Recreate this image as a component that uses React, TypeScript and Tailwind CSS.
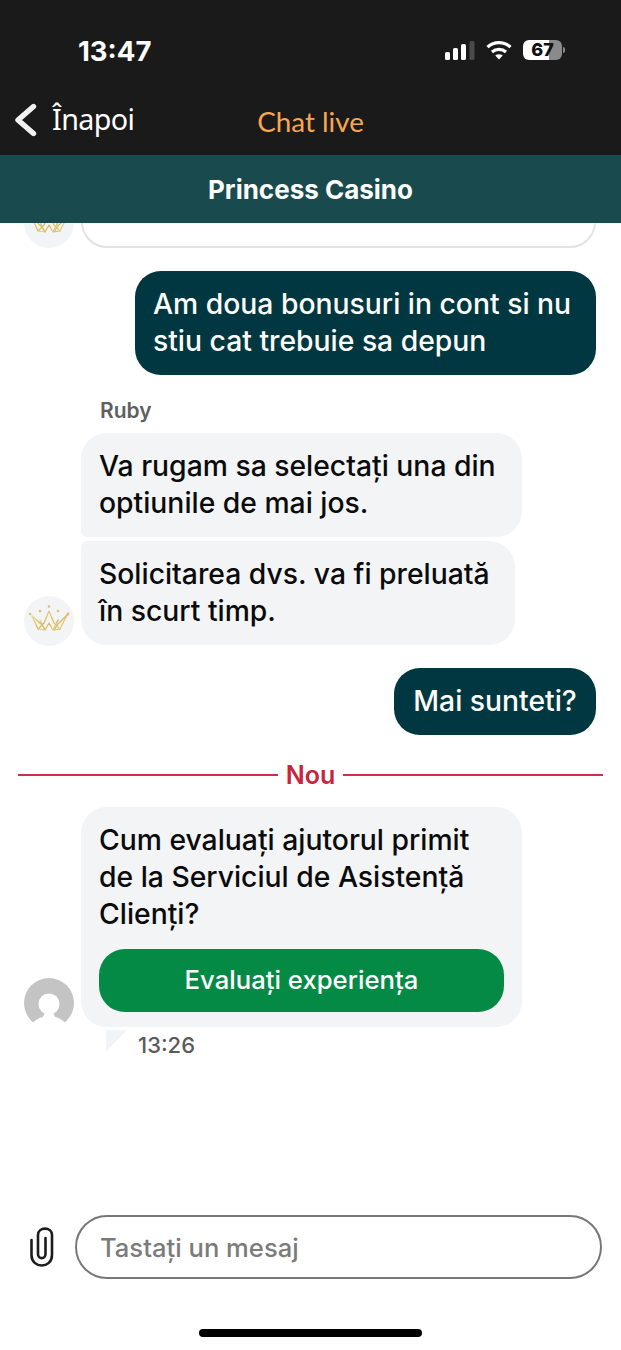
import React from "react";

const INTER = "font-['Inter','Liberation_Sans',sans-serif]";

function Crown() {
  return (
    <svg viewBox="0 0 50 50" className="w-[50px] h-[50px]">
      <defs>
        <linearGradient id="gold" x1="0" y1="0" x2="1" y2="1">
          <stop offset="0" stopColor="#f0dca0" />
          <stop offset="0.5" stopColor="#d9b658" />
          <stop offset="1" stopColor="#ecd48e" />
        </linearGradient>
      </defs>
      <circle cx="25" cy="25" r="25" fill="#f3f4f6" />
      <g fill="none" stroke="url(#gold)" strokeWidth="1.2" strokeLinejoin="round" strokeLinecap="round">
        <path d="M8 20 L14 33 L20 27 L25 15 L30 27 L36 33 L43 19" />
        <path d="M8 20 L17 28 L21 34 L14 33" />
        <path d="M43 19 L34 28 L30 34 L36 33" />
        <path d="M16 24 L21 34 L25 27 L29 34 L34 24" />
        <path d="M16 24 L18 29 M34 24 L32 29" />
      </g>
      <g fill="#e0bf68">
        <circle cx="6" cy="18" r="1.3" />
        <circle cx="16" cy="15" r="1.3" />
        <circle cx="25" cy="10.5" r="1.3" />
        <circle cx="34" cy="15" r="1.3" />
        <circle cx="44" cy="18" r="1.4" />
      </g>
    </svg>
  );
}

function UserAvatar() {
  return (
    <svg viewBox="0 0 50 50" className="w-[50px] h-[50px] shrink-0">
      <circle cx="25" cy="25" r="25" fill="#c4c4c4" />
      <circle cx="25" cy="26" r="10.5" fill="#ffffff" />
      <path d="M21 34 L29 34 L31 39 C35 40 38 41.5 41 44.5 L41 50 L9 50 L9 44.5 C12 41.5 15 40 19 39 Z" fill="#ffffff" />
      <rect x="0" y="44.5" width="50" height="6" fill="#ffffff" />
    </svg>
  );
}

function Signal() {
  return (
    <svg viewBox="0 0 30 19" className="w-[30px] h-[19px]">
      <rect x="0" y="11" width="5" height="8" rx="1.6" fill="#fff" />
      <rect x="8" y="7" width="5" height="12" rx="1.6" fill="#fff" />
      <rect x="16" y="3" width="5" height="16" rx="1.6" fill="#fff" />
      <rect x="24.5" y="0" width="5" height="19" rx="1.6" fill="#4a4a4a" />
    </svg>
  );
}

function Wifi() {
  return (
    <svg viewBox="0 0 26 20" className="w-[26px] h-[20px]" fill="none" stroke="#fff" strokeWidth="3.2">
      <path d="M1.5 7.2 C8 1 18 1 24.5 7.2" />
      <path d="M6 12 C10 8.5 16 8.5 20 12" />
      <path d="M13 19.5 L9.2 15.6 C11.5 13.8 14.5 13.8 16.8 15.6 Z" fill="#fff" stroke="none" />
    </svg>
  );
}

function Clip() {
  return (
    <svg viewBox="0 0 24 40" className="w-[24px] h-[40px]" fill="none" stroke="#1c1c1c" strokeWidth="2.6" strokeLinecap="round">
      <path d="M1.5 13 V28 C1.5 42 22 42 22 28 V8 C22 -0.5 8 -0.5 8 8 V27 C8 32.5 15.5 32.5 15.5 27 V11" />
    </svg>
  );
}

export default function App() {
  return (
    <div className={`w-[621px] h-[1350px] bg-white flex flex-col overflow-hidden ${INTER}`}>
      <header className="h-[155px] shrink-0 bg-[#1a1a1a] flex flex-col text-white">
        <div className="h-[97px] pt-[34px] pl-[78px] pr-[56px] flex items-start justify-between">
          <span className="text-[27.5px] leading-[34px] font-bold">13:47</span>
          <div className="flex items-center gap-[11px] pt-[6px]">
            <Signal />
            <Wifi />
            <div className="flex items-center gap-[1px]">
              <div className="w-[39px] h-[20px] rounded-[6px] bg-[linear-gradient(90deg,#ffffff_0,#ffffff_26px,#8a8a8a_26px,#8a8a8a_100%)] text-[#111] text-[18px] leading-[20px] font-extrabold text-center">
                67
              </div>
              <div className="w-[2px] h-[6px] rounded-r-full bg-[#8a8a8a]" />
            </div>
          </div>
        </div>
        <div className="grid grid-cols-[1fr_auto_1fr] items-center pl-[14px] pr-[14px] h-[46px]">
          <div className="flex items-center gap-[15px]">
            <svg viewBox="0 0 23 34" className="w-[23px] h-[34px]" fill="none" stroke="#f2f2f2" strokeWidth="5.4" strokeLinecap="round" strokeLinejoin="round">
              <path d="M19.5 3.5 L4 17 L19.5 30.5" />
            </svg>
            <span className="text-[28.7px] leading-[36px] font-['Noto_Sans','Liberation_Sans',sans-serif] tracking-[-0.6px] -mt-[2px]">Înapoi</span>
          </div>
          <span className="text-[27.8px] leading-[34px] text-[#f9a650] font-['Lato','Liberation_Sans',sans-serif] pt-[3px]">Chat live</span>
          <div />
        </div>
      </header>

      <div className="h-[68px] shrink-0 bg-[#194a4e] flex items-center justify-center text-white text-[26px] font-bold">
        Princess Casino
      </div>

      <main className="flex-1 flex flex-col">
        <div className="h-[25px] overflow-hidden flex items-end pl-[24px] pr-[25px] gap-[7px]">
          <div className="shrink-0"><Crown /></div>
          <div className="flex-1 h-[60px] bg-white border-2 border-[#e3e3e3] rounded-[26px]" />
        </div>

        <div className="flex justify-end pr-[25px] mt-[23px]">
          <div className="w-[461px] h-[104px] bg-[#013740] text-white rounded-[26px] pl-[18px] pr-[10px] pt-[15px] text-[28.3px] leading-[37px] font-medium">
            Am doua bonusuri in cont si nu stiu cat trebuie sa depun
          </div>
        </div>

        <div className="pl-[100px] mt-[24px] text-[21px] leading-[24px] font-semibold text-[#5f5f5f]">Ruby</div>

        <div className="pl-[81px] mt-[10px]">
          <div className="w-[441px] h-[104px] bg-[#f3f4f6] rounded-[26px] rounded-bl-[6px] pl-[18px] pr-[18px] pt-[15px] text-[28.3px] leading-[37px] font-medium text-[#0b0b0b]">
            Va rugam sa selectați una din optiunile de mai jos.
          </div>
        </div>

        <div className="flex items-end pl-[24px] mt-[4px] gap-[7px]">
          <div className="shrink-0 mb-[-1px]"><Crown /></div>
          <div className="w-[434px] h-[104px] bg-[#f3f4f6] rounded-[26px] rounded-tl-[6px] pl-[18px] pr-[18px] pt-[15px] text-[28.3px] leading-[37px] font-medium text-[#0b0b0b]">
            Solicitarea dvs. va fi preluată în scurt timp.
          </div>
        </div>

        <div className="flex justify-end pr-[25px] mt-[23px]">
          <div className="h-[67px] w-[202px] flex items-center justify-center bg-[#013740] text-white rounded-[26px] text-[28.3px] font-medium">
            Mai sunteti?
          </div>
        </div>

        <div className="flex items-center px-[18px] mt-[23px] gap-[8px] h-[34px]">
          <div className="flex-1 h-[2px] bg-[#cf3045]" />
          <span className="text-[25px] leading-[34px] font-semibold text-[#c8243c]">Nou</span>
          <div className="flex-1 h-[2px] bg-[#cf3045]" />
        </div>

        <div className="flex items-end pl-[24px] mt-[15px] gap-[7px]">
          <div className="shrink-0 mb-[-1px]"><UserAvatar /></div>
          <div className="w-[441px] h-[220px] bg-[#f3f4f6] rounded-[26px] px-[18px] pt-[15px] text-[#0b0b0b]">
            <p className="text-[28.3px] leading-[37px] font-medium">Cum evaluați ajutorul primit de la Serviciul de Asistență Clienți?</p>
            <button className="mt-[16px] w-full h-[63px] rounded-[26px] bg-[#058a46] text-white text-[25.7px] font-medium">
              Evaluați experiența
            </button>
          </div>
        </div>

        <div className="flex items-start pl-[106px] mt-[3px] gap-[11px]">
          <div className="w-[21px] h-[22px] bg-[#f3f4f6] [clip-path:polygon(0_0,100%_0,0_100%)]" />
          <span className="text-[22px] leading-[30px] text-[#5a5a5a] font-medium">13:26</span>
        </div>

        <div className="flex-1" />

        <div className="flex items-center pl-[30px] pr-[19px] gap-[21px]">
          <Clip />
          <div className="flex-1 h-[64px] border-2 border-[#777777] rounded-[32px] flex items-center pl-[23px] pt-[2px] text-[25.6px] font-medium text-[#7b7b7b]">
            Tastați un mesaj
          </div>
        </div>

        <div className="flex justify-center mt-[50px] mb-[13px]">
          <div className="w-[223px] h-[8px] rounded-full bg-black" />
        </div>
      </main>
    </div>
  );
}
